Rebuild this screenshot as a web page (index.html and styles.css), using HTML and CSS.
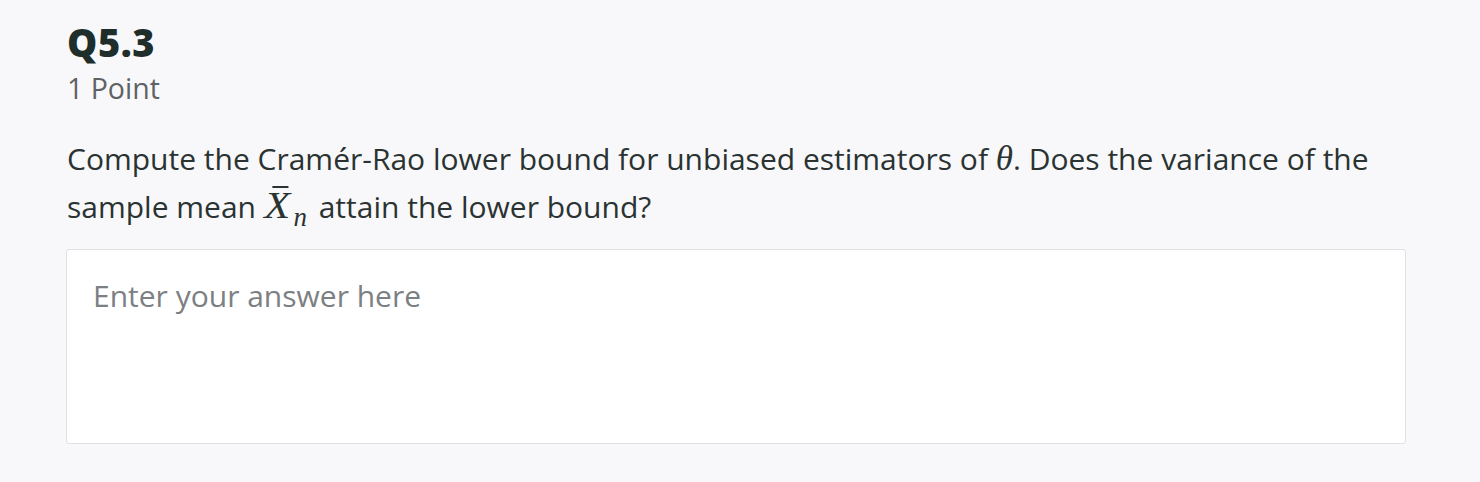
FILE: index.html
```html
<!DOCTYPE html>
<html>
<head>
<meta charset="utf-8">
<link rel="stylesheet" href="styles.css">
</head>
<body>
<div class="question">
  <div class="q-head">
    <div class="q-title">Q5.3</div>
    <div class="q-points">1 Point</div>
  </div>
  <p class="q-text">Compute the Cramér-Rao lower bound for unbiased estimators of <span class="math">θ</span>. Does the variance of the sample mean <span class="math mx"><span class="xbar">X</span><sub class="sub">n</sub></span> attain the lower bound?</p>
  <div class="answer">Enter your answer here</div>
</div>
</body>
</html>
```
FILE: styles.css
```css
html, body {
  margin: 0;
  padding: 0;
  background: #f8f8fa;
}
body {
  font-family: "Open Sans", "Noto Sans", sans-serif;
  color: #273333;
}
.question {
  padding: 19px 74px 0 66px;
}
.q-title {
  font-size: 38px;
  font-weight: 800;
  line-height: 46px;
  letter-spacing: 0.6px;
  color: #1f2d2b;
  padding-left: 1px;
}
.q-points {
  font-size: 28.5px;
  line-height: 46px;
  color: #5f6265;
  padding-left: 1px;
}
.q-text {
  margin: 24px 0 0 1px;
  font-size: 30px;
  line-height: 48px;
  color: #2a3332;
}
.math {
  font-family: "Liberation Serif", "DejaVu Serif", serif;
  font-style: italic;
  font-size: 35px;
}
.mx {
  margin-right: 4px;
}
.xbar {
  display: inline-block;
  position: relative;
  font-size: 37px;
  line-height: 40px;
  transform: scaleX(1.15);
  margin: 0 2px 0 2px;
}
.xbar::before {
  content: "";
  position: absolute;
  left: 7px;
  right: 2px;
  top: 0;
  height: 2px;
  background: #2a3332;
}
.sub {
  font-size: 27px;
  vertical-align: -8px;
  line-height: 0;
  margin-left: 3px;
}
.answer {
  margin-top: 18px;
  height: 195px;
  background: #fff;
  border: 1px solid #dfe0e3;
  border-radius: 3px;
  box-sizing: border-box;
  padding: 28px 26px;
  font-size: 30px;
  line-height: 36px;
  color: #7c8083;
}
```
